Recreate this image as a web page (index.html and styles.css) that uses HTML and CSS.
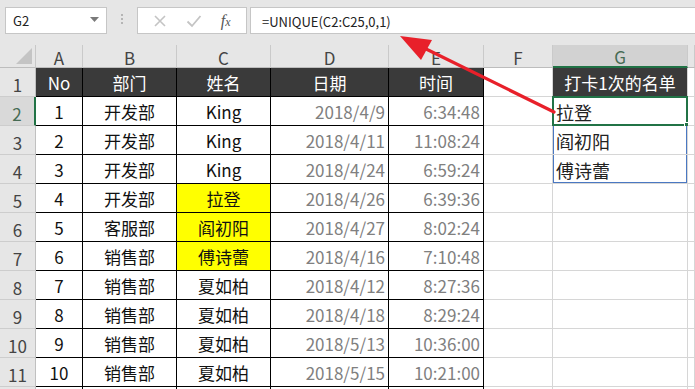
FILE: index.html
```html
<!DOCTYPE html>
<html lang="zh-CN">

<head>
    <meta charset="UTF-8">
    <meta name="viewport" content="width=device-width, initial-scale=1.0">
    <title>UNIQUE</title>
    <link rel="stylesheet" href="styles.css">
</head>

<body>
    <div class="app">
        <!-- 编辑栏 -->
        <div class="toolbar">
            <div class="namebox">
                <span>G2</span>
                <svg class="caret" width="9" height="5" viewBox="0 0 9 5"><polygon points="0,0 9,0 4.5,5" fill="#7a7a7a" /></svg>
            </div>
            <div class="grip"><i></i><i></i><i></i></div>
            <div class="fbtns">
                <svg class="btn" width="14" height="14" viewBox="0 0 14 14"><path d="M2 2 L12 12 M12 2 L2 12" stroke="#c4c4c4" stroke-width="1.6" fill="none" /></svg>
                <svg class="btn" width="16" height="14" viewBox="0 0 16 14"><path d="M1.5 7.5 L6 12 L14.5 2" stroke="#c4c4c4" stroke-width="1.8" fill="none" /></svg>
                <span class="fx">f<small>x</small></span>
            </div>
            <div class="formula">=UNIQUE(C2:C25,0,1)</div>
        </div>

        <!-- 表格 -->
        <div class="sheet">
            <div class="corner"><span class="tri"></span></div>
            <div class="ch">A</div>
            <div class="ch">B</div>
            <div class="ch">C</div>
            <div class="ch">D</div>
            <div class="ch">E</div>
            <div class="ch">F</div>
            <div class="ch sel">G</div>
            <div class="ch"></div>

            <div class="rh">1</div>
            <div class="c t hd">No</div>
            <div class="c t hd">部门</div>
            <div class="c t hd">姓名</div>
            <div class="c t hd">日期</div>
            <div class="c t hd">时间</div>
            <div class="c"></div>
            <div class="c hd">打卡1次的名单</div>
            <div class="c"></div>

            <div class="rh sel">2</div>
            <div class="c t">1</div>
            <div class="c t">开发部</div>
            <div class="c t">King</div>
            <div class="c t dt">2018/4/9</div>
            <div class="c t dt">6:34:48</div>
            <div class="c"></div>
            <div class="c sp sp-top active">拉登<span class="cursor"><b></b></span></div>
            <div class="c"></div>

            <div class="rh">3</div>
            <div class="c t">2</div>
            <div class="c t">开发部</div>
            <div class="c t">King</div>
            <div class="c t dt">2018/4/11</div>
            <div class="c t dt">11:08:24</div>
            <div class="c"></div>
            <div class="c sp">阎初阳</div>
            <div class="c"></div>

            <div class="rh">4</div>
            <div class="c t">3</div>
            <div class="c t">开发部</div>
            <div class="c t">King</div>
            <div class="c t dt">2018/4/24</div>
            <div class="c t dt">6:59:24</div>
            <div class="c"></div>
            <div class="c sp sp-end">傅诗蕾</div>
            <div class="c"></div>

            <div class="rh">5</div>
            <div class="c t">4</div>
            <div class="c t">开发部</div>
            <div class="c t yl">拉登</div>
            <div class="c t dt">2018/4/26</div>
            <div class="c t dt">6:39:36</div>
            <div class="c"></div>
            <div class="c"></div>
            <div class="c"></div>

            <div class="rh">6</div>
            <div class="c t">5</div>
            <div class="c t">客服部</div>
            <div class="c t yl">阎初阳</div>
            <div class="c t dt">2018/4/27</div>
            <div class="c t dt">8:02:24</div>
            <div class="c"></div>
            <div class="c"></div>
            <div class="c"></div>

            <div class="rh">7</div>
            <div class="c t">6</div>
            <div class="c t">销售部</div>
            <div class="c t yl">傅诗蕾</div>
            <div class="c t dt">2018/4/16</div>
            <div class="c t dt">7:10:48</div>
            <div class="c"></div>
            <div class="c"></div>
            <div class="c"></div>

            <div class="rh">8</div>
            <div class="c t">7</div>
            <div class="c t">销售部</div>
            <div class="c t">夏如柏</div>
            <div class="c t dt">2018/4/12</div>
            <div class="c t dt">8:27:36</div>
            <div class="c"></div>
            <div class="c"></div>
            <div class="c"></div>

            <div class="rh">9</div>
            <div class="c t">8</div>
            <div class="c t">销售部</div>
            <div class="c t">夏如柏</div>
            <div class="c t dt">2018/4/18</div>
            <div class="c t dt">8:29:24</div>
            <div class="c"></div>
            <div class="c"></div>
            <div class="c"></div>

            <div class="rh">10</div>
            <div class="c t">9</div>
            <div class="c t">销售部</div>
            <div class="c t">夏如柏</div>
            <div class="c t dt">2018/5/13</div>
            <div class="c t dt">10:36:00</div>
            <div class="c"></div>
            <div class="c"></div>
            <div class="c"></div>

            <div class="rh">11</div>
            <div class="c t">10</div>
            <div class="c t">销售部</div>
            <div class="c t">夏如柏</div>
            <div class="c t dt">2018/5/15</div>
            <div class="c t dt">10:21:00</div>
            <div class="c"></div>
            <div class="c"></div>
            <div class="c"></div>

            <!-- 第12行只露出一点 -->
            <div class="rh"></div>
            <div class="c t"></div>
            <div class="c t"></div>
            <div class="c t"></div>
            <div class="c t"></div>
            <div class="c t"></div>
            <div class="c"></div>
            <div class="c"></div>
            <div class="c"></div>
        </div>

        <!-- 红色箭头 -->
        <svg class="arrow" width="695" height="389" viewBox="0 0 695 389">
            <line x1="554" y1="112" x2="420" y2="46" stroke="#e8202a" stroke-width="3.2" stroke-linecap="round" />
            <polygon points="400,36 432,40 421,60" fill="#e8202a" />
        </svg>
    </div>
</body>

</html>
```

FILE: styles.css
```css
* {
    box-sizing: border-box;
}

body {
    margin: 0;
    font-family: "Noto Sans CJK SC", "Noto Sans", sans-serif;
    background: #e6e6e6;
}

.app {
    position: relative;
    width: 695px;
    height: 389px;
    overflow: hidden;
    background: #e6e6e6;
}

/* 编辑栏 */
.toolbar {
    display: flex;
    align-items: flex-start;
    height: 45px;
    padding: 7px 0 0 5px;
}

.namebox {
    display: flex;
    align-items: center;
    justify-content: space-between;
    width: 102px;
    height: 27px;
    padding: 0 7px 0 7px;
    background: #fff;
    border: 1px solid #c6c6c6;
    font-size: 13px;
    color: #222;
}

.caret {
    margin-top: -2px;
}

.grip {
    display: flex;
    flex-direction: column;
    gap: 2px;
    width: 30px;
    padding-top: 7px;
    align-items: center;
}

.grip i {
    display: block;
    width: 2px;
    height: 2px;
    background: #b5b5b5;
}

.fbtns {
    display: flex;
    align-items: center;
    justify-content: space-around;
    width: 110px;
    height: 27px;
    padding: 0 6px 0 6px;
    background: #fff;
    border: 1px solid #c6c6c6;
}

.fx {
    font-family: "Liberation Serif", serif;
    font-style: italic;
    font-size: 16px;
    color: #555;
    line-height: 1;
}

.fx small {
    font-size: 12px;
}

.formula {
    flex: 1;
    height: 27px;
    margin-left: 3px;
    padding: 4px 0 0 11px;
    background: #fff;
    border: 1px solid #c6c6c6;
    border-right: 0;
    font-size: 13px;
    color: #222;
}

/* 表格 */
.sheet {
    display: grid;
    grid-template-columns: 36px 47px 94px 94px 118px 95px 69px 135px 1fr;
    grid-template-rows: 23px;
    grid-auto-rows: 29px;
}

.corner {
    position: relative;
    border-right: 1px solid #c8c8c8;
    border-bottom: 1px solid #bdbdbd;
}

.corner .tri {
    position: absolute;
    right: 3px;
    bottom: 3px;
    width: 0;
    height: 0;
    border-left: 16px solid transparent;
    border-bottom: 16px solid #c4c4c4;
}

.ch {
    display: flex;
    align-items: center;
    justify-content: center;
    padding-top: 2px;
    border-right: 1px solid #cacaca;
    border-bottom: 1px solid #bdbdbd;
    font-size: 17px;
    color: #444;
}

.ch.sel {
    background: #d2d2d2;
    border-bottom: 2px solid #217346;
    color: #466b54;
}

.rh {
    display: flex;
    align-items: flex-end;
    justify-content: center;
    padding-bottom: 0;
    border-right: 1px solid #c0c0c0;
    border-bottom: 1px solid #cdcdcd;
    font-size: 17px;
    line-height: 22px;
    color: #444;
}

.rh.sel {
    background: #d9d9d9;
    border-right: 2px solid #217346;
    color: #466b54;
}

.c {
    position: relative;
    display: flex;
    align-items: center;
    justify-content: center;
    padding-top: 1px;
    background: #fff;
    border-right: 1px solid #d6d6d6;
    border-bottom: 1px solid #d6d6d6;
    font-size: 17px;
    color: #111;
    white-space: nowrap;
}

.c.t {
    border-right-color: #000;
    border-bottom-color: #000;
}

.c.hd {
    background: #3a3a3a;
    color: #fff;
}

.c.dt {
    justify-content: flex-end;
    padding-right: 3px;
    color: #808080;
}

.c.yl {
    background: #ffff00;
}

/* 溢出区域 */
.c.sp {
    justify-content: flex-start;
    padding-left: 3px;
    font-size: 18px;
    color: #222;
    box-shadow: inset 1px 0 #4a78c2, inset -1px 0 #4a78c2;
}

.c.sp-end {
    box-shadow: inset 1px 0 #4a78c2, inset -1px 0 #4a78c2, inset 0 -1px #4a78c2;
}

.cursor {
    position: absolute;
    top: -1px;
    left: -1px;
    right: -1px;
    bottom: -1px;
    border: 2px solid #217346;
}

.cursor b {
    position: absolute;
    right: -4px;
    bottom: -4px;
    width: 6px;
    height: 6px;
    background: #217346;
    border: 1px solid #fff;
}

.arrow {
    position: absolute;
    top: 0;
    left: 0;
    pointer-events: none;
}
```
